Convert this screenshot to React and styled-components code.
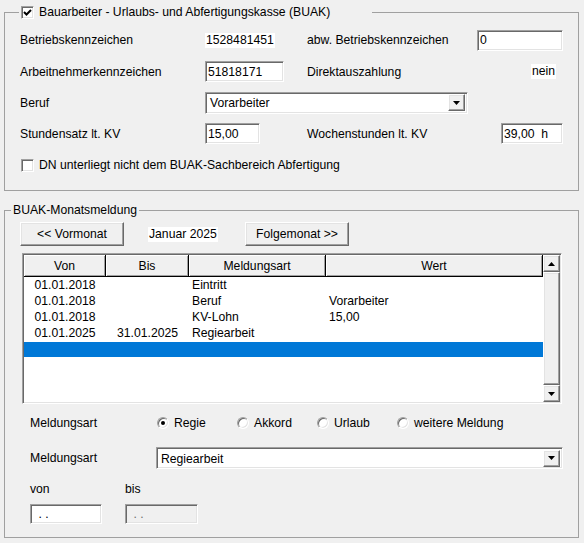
import React from 'react'
import styled, { createGlobalStyle } from 'styled-components'

const GlobalStyle = createGlobalStyle`
  html, body {
    margin: 0;
    background: #f0f0f0;
  }
  body {
    font-family: 'Liberation Sans', Arial, sans-serif;
    font-size: 12.2px;
    color: #000;
  }
`

const Window = styled.div`
  width: 584px;
  height: 543px;
  box-sizing: border-box;
  padding: 5px 5px 0 4px;
  display: flex;
  flex-direction: column;
  gap: 12px;
`

const Group = styled.fieldset`
  margin: 0;
  padding: ${p => p.$pad};
  border: 1px solid #a0a0a0;
  min-width: 0;
`

const Legend = styled.legend`
  margin-left: ${p => p.$offset}px;
  padding: 0 2px;
  width: ${p => (p.$width ? `${p.$width}px` : 'auto')};
  box-sizing: border-box;
  display: flex;
  align-items: center;
  gap: 5px;
  height: 15px;
  line-height: 15px;
`

const FormRow = styled.div`
  display: grid;
  grid-template-columns: 185px 102px 1fr auto;
  align-items: center;
  height: ${p => p.$h}px;
`

const Label = styled.span`
  white-space: nowrap;
`

const StaticValue = styled.span`
  justify-self: start;
  background: #fff;
  padding: 0 1px;
  line-height: 15px;
  margin-right: ${p => p.$mr || 0}px;
`

const Field = styled.div`
  box-sizing: border-box;
  width: ${p => p.$w}px;
  height: ${p => p.$h || 21}px;
  background: ${p => (p.$disabled ? '#f0f0f0' : '#fff')};
  color: ${p => (p.$disabled ? '#6d6d6d' : '#000')};
  border: 1px solid;
  border-color: #a0a0a0 #fff #fff #a0a0a0;
  box-shadow: inset 1px 1px 0 #696969, inset -1px -1px 0 #e3e3e3;
  padding: 0 3px 0 ${p => p.$pl || 3}px;
  display: flex;
  align-items: center;
  white-space: pre;
`

const ComboField = styled(Field)`
  justify-content: space-between;
  padding: 1px 2px 0 4px;
  grid-column: ${p => p.$span || 'auto'};
`

const Raised = styled.span`
  box-sizing: border-box;
  display: flex;
  align-items: center;
  justify-content: center;
  background: #f0f0f0;
  border: 1px solid;
  border-color: #fff #696969 #696969 #fff;
  box-shadow: inset -1px -1px 0 #a0a0a0, inset 1px 1px 0 #e3e3e3;
`

const DropButton = styled(Raised)`
  width: 17px;
  height: 17px;
  margin-top: -1px;
`

const Arrow = ({ up }) => (
  <svg width="7" height="4" viewBox="0 0 7 4">
    <polygon points={up ? '0,4 7,4 3.5,0' : '0,0 7,0 3.5,4'} fill="#000" />
  </svg>
)

const CheckBox = styled.span`
  box-sizing: border-box;
  width: 13px;
  height: 13px;
  background: #fff;
  border: 1px solid;
  border-color: #a0a0a0 #fff #fff #a0a0a0;
  box-shadow: inset 1px 1px 0 #696969, inset -1px -1px 0 #e3e3e3;
  display: flex;
  align-items: center;
  justify-content: center;
  flex-shrink: 0;
`

const CheckLine = styled.label`
  display: flex;
  align-items: center;
  gap: 5px;
  margin-left: 1px;
  grid-column: 1 / -1;
`

const Check = ({ checked }) => (
  <CheckBox>
    {checked && (
      <svg width="9" height="9" viewBox="0 0 9 9">
        <polyline points="1,4 3.5,6.5 8,2" fill="none" stroke="#000" strokeWidth="2" />
      </svg>
    )}
  </CheckBox>
)

const MonthBar = styled.div`
  display: grid;
  grid-template-columns: 128px 97px 104px;
  align-items: center;
  height: 24px;
`

const Button = styled(Raised)`
  width: ${p => p.$w}px;
  height: 24px;
  font: inherit;
  white-space: nowrap;
`

const ListView = styled.div`
  box-sizing: border-box;
  margin: 7px 0 0 2px;
  width: 540px;
  height: 151px;
  border: 1px solid;
  border-color: #a0a0a0 #fff #fff #a0a0a0;
  box-shadow: inset 1px 1px 0 #696969, inset -1px -1px 0 #e3e3e3;
  padding: 1px;
  background: #fff;
  display: flex;
`

const ListBody = styled.div`
  flex: 1;
  display: flex;
  flex-direction: column;
`

const columns = '82px 83px 137px 1fr'

const HeaderRow = styled.div`
  display: grid;
  grid-template-columns: ${columns};
  height: 22px;
`

const HeaderCell = styled.div`
  box-sizing: border-box;
  background: #f0f0f0;
  border-right: 1px solid #000;
  border-bottom: 1px solid #000;
  box-shadow: inset 1px 1px 0 #fff, inset -1px -1px 0 #a0a0a0;
  display: flex;
  align-items: center;
  justify-content: center;
`

const DataRow = styled.div`
  display: grid;
  grid-template-columns: ${columns};
  height: ${p => (p.$selected ? 15 : 16)}px;
  margin-top: ${p => (p.$selected ? 1 : 0)}px;
  align-items: center;
  background: ${p => (p.$selected ? '#0078d7' : 'transparent')};
`

const Cell = styled.span`
  text-align: ${p => (p.$center ? 'center' : 'left')};
  padding-left: ${p => (p.$center ? 0 : 3)}px;
  white-space: nowrap;
`

const ScrollBar = styled.div`
  width: 17px;
  display: flex;
  flex-direction: column;
  background: #f0f0f0;
`

const ScrollButton = styled(Raised)`
  height: 17px;
`

const Thumb = styled(Raised)`
  flex: 1;
`

const OptionRow = styled.div`
  display: flex;
  align-items: center;
  height: ${p => p.$h}px;
  margin-top: ${p => p.$mt}px;
  padding-left: 10px;
`

const OptionLabel = styled.span`
  width: ${p => p.$w}px;
  flex-shrink: 0;
`

const Radio = styled.label`
  width: 80px;
  flex-shrink: 0;
  display: flex;
  align-items: center;
  gap: 5px;
  white-space: nowrap;
  &:last-child {
    width: auto;
  }
`

const RadioDot = styled.span`
  box-sizing: border-box;
  width: 12px;
  height: 12px;
  flex-shrink: 0;
  border-radius: 50%;
  background: #fff;
  border: 1px solid;
  border-color: #a0a0a0 #fff #fff #a0a0a0;
  box-shadow: inset 1px 1px 0 #696969, inset -1px -1px 0 #e3e3e3;
  display: flex;
  align-items: center;
  justify-content: center;
  &::after {
    content: '';
    width: 4px;
    height: 4px;
    border-radius: 50%;
    background: ${p => (p.$on ? '#000' : 'transparent')};
  }
`

const DateLabels = styled.div`
  display: grid;
  grid-template-columns: 95px 95px;
  padding-left: 10px;
  margin-top: ${p => p.$mt}px;
  height: ${p => p.$h}px;
  align-items: center;
`

const rows = [
  { von: '01.01.2018', bis: '', art: 'Eintritt', wert: '' },
  { von: '01.01.2018', bis: '', art: 'Beruf', wert: 'Vorarbeiter' },
  { von: '01.01.2018', bis: '', art: 'KV-Lohn', wert: '15,00' },
  { von: '01.01.2025', bis: '31.01.2025', art: 'Regiearbeit', wert: '' },
]

const options = ['Regie', 'Akkord', 'Urlaub', 'weitere Meldung']

export default function App() {
  return (
    <>
      <GlobalStyle />
      <Window>
        <Group $pad="4px 15px 9px 15px">
          <Legend $offset={-1} $width={353}>
            <Check checked />
            Bauarbeiter - Urlaubs- und Abfertigungskasse (BUAK)
          </Legend>
          <FormRow $h={32}>
            <Label>Betriebskennzeichen</Label>
            <StaticValue>1528481451</StaticValue>
            <Label>abw. Betriebskennzeichen</Label>
            <Field $w={86} $pl={2}>0</Field>
          </FormRow>
          <FormRow $h={31}>
            <Label>Arbeitnehmerkennzeichen</Label>
            <Field $w={79} $pl={2}>51818171</Field>
            <Label>Direktauszahlung</Label>
            <StaticValue $mr={7}>nein</StaticValue>
          </FormRow>
          <FormRow $h={31}>
            <Label>Beruf</Label>
            <ComboField $w={263} $h={22} $span="2 / 4">
              Vorarbeiter
              <DropButton><Arrow /></DropButton>
            </ComboField>
          </FormRow>
          <FormRow $h={31}>
            <Label>Stundensatz lt. KV</Label>
            <Field $w={55} $pl={2}>15,00</Field>
            <Label>Wochenstunden lt. KV</Label>
            <Field $w={62} $pl={2}>39,00  h</Field>
          </FormRow>
          <FormRow $h={32}>
            <CheckLine>
              <Check />
              DN unterliegt nicht dem BUAK-Sachbereich Abfertigung
            </CheckLine>
          </FormRow>
        </Group>

        <Group $pad="4px 15px 13px 15px">
          <Legend $offset={-9}>BUAK-Monatsmeldung</Legend>
          <MonthBar>
            <Button $w={104}>&lt;&lt; Vormonat</Button>
            <StaticValue>Januar 2025</StaticValue>
            <Button $w={104}>Folgemonat &gt;&gt;</Button>
          </MonthBar>

          <ListView>
            <ListBody>
              <HeaderRow>
                <HeaderCell>Von</HeaderCell>
                <HeaderCell>Bis</HeaderCell>
                <HeaderCell>Meldungsart</HeaderCell>
                <HeaderCell>Wert</HeaderCell>
              </HeaderRow>
              {rows.map((r, i) => (
                <DataRow key={i}>
                  <Cell $center>{r.von}</Cell>
                  <Cell $center>{r.bis}</Cell>
                  <Cell>{r.art}</Cell>
                  <Cell>{r.wert}</Cell>
                </DataRow>
              ))}
              <DataRow $selected />
            </ListBody>
            <ScrollBar>
              <ScrollButton><Arrow up /></ScrollButton>
              <Thumb />
              <ScrollButton><Arrow /></ScrollButton>
            </ScrollBar>
          </ListView>

          <OptionRow $h={20} $mt={9}>
            <OptionLabel $w={127}>Meldungsart</OptionLabel>
            {options.map((o, i) => (
              <Radio key={o}>
                <RadioDot $on={i === 0} />
                {o}
              </Radio>
            ))}
          </OptionRow>

          <OptionRow $h={22} $mt={14}>
            <OptionLabel $w={126}>Meldungsart</OptionLabel>
            <ComboField $w={407} $h={22}>
              Regiearbeit
              <DropButton><Arrow /></DropButton>
            </ComboField>
          </OptionRow>

          <DateLabels $mt={12} $h={15}>
            <span>von</span>
            <span>bis</span>
          </DateLabels>
          <DateLabels $mt={8} $h={20}>
            <Field $w={72} $h={20} $pl={4}> . .</Field>
            <Field $w={73} $h={20} $pl={4} $disabled> . .</Field>
          </DateLabels>
        </Group>
      </Window>
    </>
  )
}
